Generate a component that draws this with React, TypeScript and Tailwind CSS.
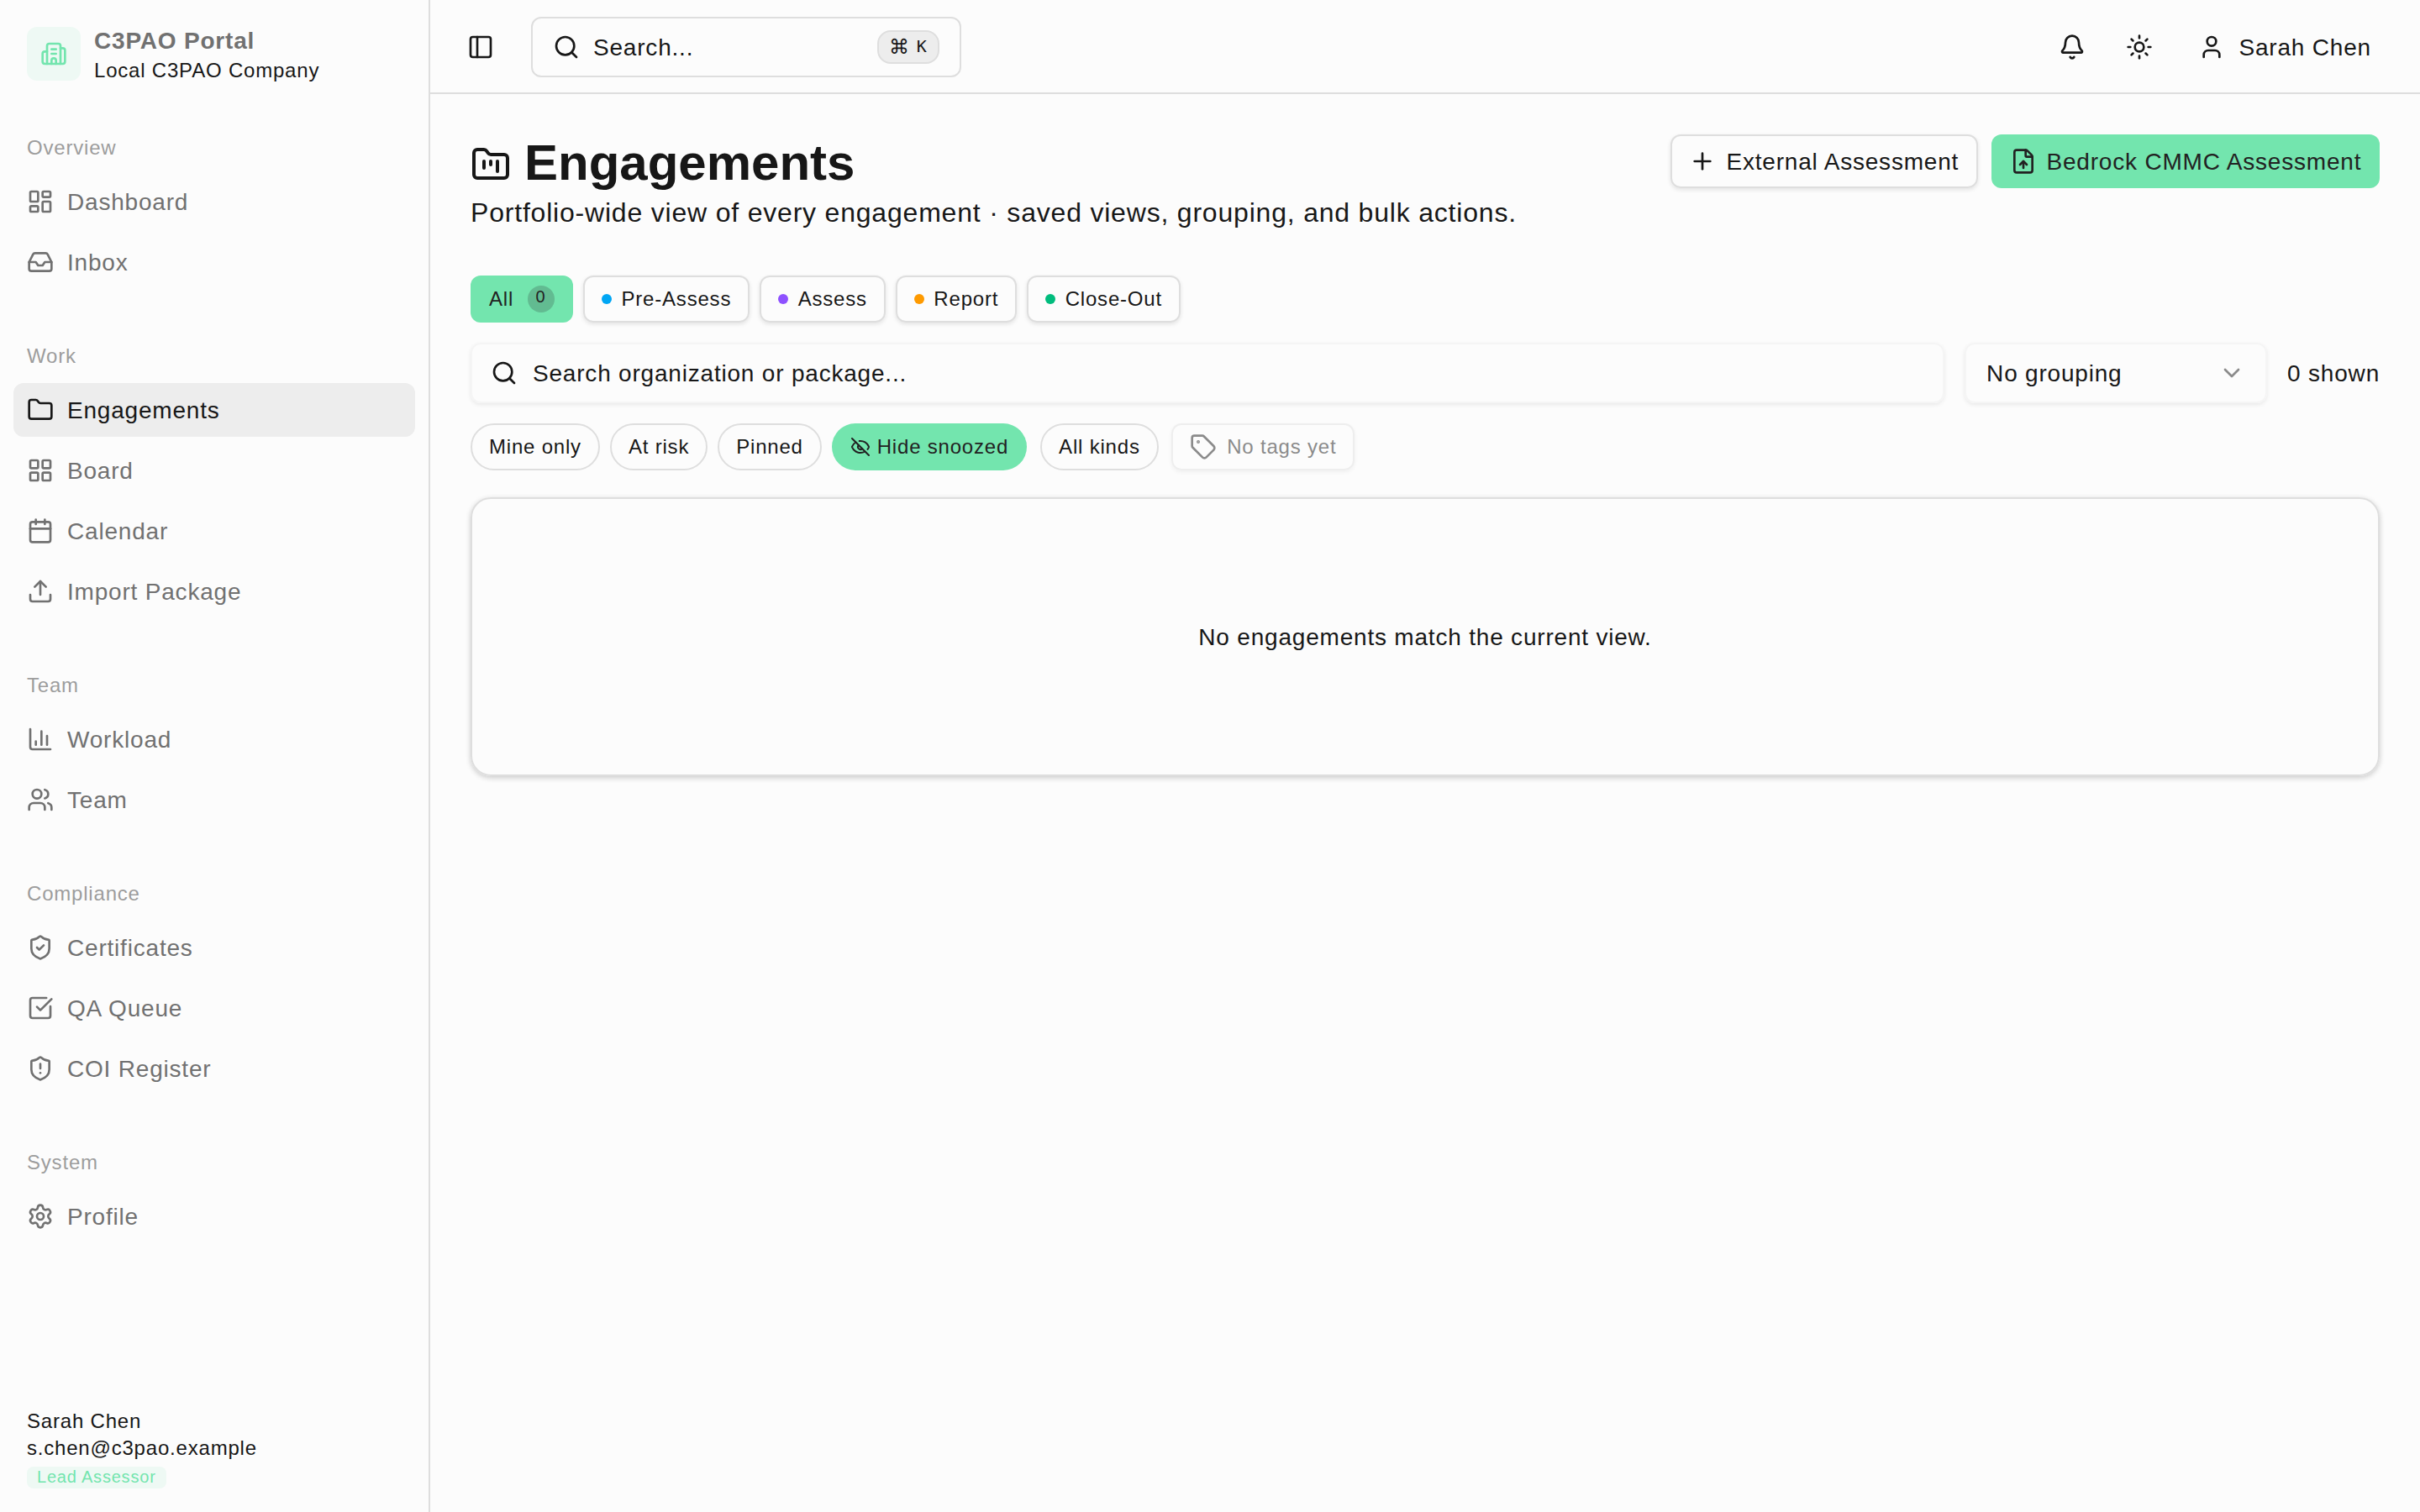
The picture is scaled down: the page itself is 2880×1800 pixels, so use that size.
import {
  Bell,
  Building2,
  Calendar,
  ChartColumn,
  ChevronDown,
  EyeOff,
  FileUp,
  Folder,
  FolderKanban,
  Inbox,
  LayoutDashboard,
  LayoutGrid,
  PanelLeft,
  Plus,
  Search,
  Settings,
  ShieldAlert,
  ShieldCheck,
  SquareCheckBig,
  Sun,
  Tag,
  Upload,
  User,
  Users,
  type LucideIcon,
} from "lucide-react";
import { useState } from "react";

interface NavItem {
  label: string;
  icon: LucideIcon;
}

interface NavGroup {
  title: string;
  items: NavItem[];
}

const navGroups: NavGroup[] = [
  {
    title: "Overview",
    items: [
      { label: "Dashboard", icon: LayoutDashboard },
      { label: "Inbox", icon: Inbox },
    ],
  },
  {
    title: "Work",
    items: [
      { label: "Engagements", icon: Folder },
      { label: "Board", icon: LayoutGrid },
      { label: "Calendar", icon: Calendar },
      { label: "Import Package", icon: Upload },
    ],
  },
  {
    title: "Team",
    items: [
      { label: "Workload", icon: ChartColumn },
      { label: "Team", icon: Users },
    ],
  },
  {
    title: "Compliance",
    items: [
      { label: "Certificates", icon: ShieldCheck },
      { label: "QA Queue", icon: SquareCheckBig },
      { label: "COI Register", icon: ShieldAlert },
    ],
  },
  {
    title: "System",
    items: [{ label: "Profile", icon: Settings }],
  },
];

const phases = [
  { label: "Pre-Assess", dot: "bg-[#00a6f4]" },
  { label: "Assess", dot: "bg-[#8e51ff]" },
  { label: "Report", dot: "bg-[#fe9a00]" },
  { label: "Close-Out", dot: "bg-[#00bc7d]" },
];

function Sidebar() {
  const [active, setActive] = useState("Engagements");

  return (
    <aside className="flex w-[512px] shrink-0 flex-col border-r-2 border-[#dedede]">
      <div className="mt-8 flex h-16 items-center gap-4 px-8">
        <div className="flex size-16 items-center justify-center rounded-xl bg-[#eef9f4] text-[#73e5ae]">
          <Building2 size={32} />
        </div>
        <div>
          <p className="text-[28px] leading-10 font-semibold text-[#717171]">C3PAO Portal</p>
          <p className="text-2xl leading-[30px]">Local C3PAO Company</p>
        </div>
      </div>

      <nav className="mt-12 flex flex-1 flex-col gap-12 px-4">
        {navGroups.map((group) => (
          <div key={group.title}>
            <p className="flex h-16 items-center px-4 text-2xl text-[#9d9d9d]">{group.title}</p>
            <ul className="space-y-2">
              {group.items.map(({ label, icon: Icon }) => (
                <li key={label}>
                  <button
                    type="button"
                    onClick={() => setActive(label)}
                    className={`flex h-16 w-full items-center gap-4 rounded-xl px-4 text-[28px] ${active === label ? "bg-[#ededed] text-[#171717]" : "text-[#717171]"}`}
                  >
                    <Icon size={32} />
                    <span className="pt-px">{label}</span>
                  </button>
                </li>
              ))}
            </ul>
          </div>
        ))}
      </nav>

      <div className="px-8 pb-7 text-2xl leading-8">
        <p>Sarah Chen</p>
        <p>s.chen@c3pao.example</p>
        <span className="mt-1.5 flex h-[26px] w-fit items-center rounded-lg bg-[#eef9f4] px-3 pb-[3px] text-xl text-[#73e5ae]">
          Lead Assessor
        </span>
      </div>
    </aside>
  );
}

function Topbar() {
  return (
    <header className="flex h-28 shrink-0 items-center border-b-2 border-[#dedede] pt-0.5 pr-9 pl-7">
      <button type="button" className="flex size-16 items-center justify-center" aria-label="Toggle sidebar">
        <PanelLeft size={32} />
      </button>
      <div className="ml-7 flex h-[72px] w-[512px] items-center gap-4 rounded-xl border-2 border-[#dedede] px-6 text-[28px]">
        <Search size={32} />
        <span className="flex-1 pt-px">Search...</span>
        <kbd className="flex h-10 w-[74px] items-center gap-2 rounded-2xl border-2 border-[#dedede] bg-[#ededed] px-3 leading-none">
          <span className="font-['DejaVu_Sans',sans-serif] text-2xl leading-none">⌘</span>
          <span className="pb-0.5 font-['DejaVu_Sans_Mono',monospace] text-xl leading-none">K</span>
        </kbd>
      </div>

      <div className="ml-auto flex items-center gap-4 text-[28px]">
        <button type="button" className="flex size-16 items-center justify-center" aria-label="Notifications">
          <Bell size={32} />
        </button>
        <button type="button" className="flex size-16 items-center justify-center" aria-label="Toggle theme">
          <Sun size={32} />
        </button>
        <button type="button" className="flex h-16 w-[250px] items-center gap-[16.5px] pl-[22px] whitespace-nowrap">
          <User size={32} />
          <span className="pt-px">Sarah Chen</span>
        </button>
      </div>
    </header>
  );
}

function PillButton({ label }: { label: string }) {
  return (
    <button type="button" className="flex h-14 items-center rounded-full border-2 border-[#dedede] px-5">
      {label}
    </button>
  );
}

export default function App() {
  return (
    <div className="flex h-[1800px] w-[2880px] overflow-hidden bg-[#fcfcfc] font-['Liberation_Sans',Arial,sans-serif] tracking-[0.8px] text-[#171717]">
      <Sidebar />

      <div className="flex min-w-0 flex-1 flex-col">
        <Topbar />

        <main className="flex flex-col p-12">
          <div className="flex items-start justify-between">
            <div>
              <h1 className="flex h-16 items-center gap-4 text-[60px] leading-[64px] font-bold tracking-normal">
                <FolderKanban size={48} className="mt-2" />
                <span className="pt-[3px]">Engagements</span>
              </h1>
              <p className="mt-[5px] text-[32px] leading-[48px]">
                Portfolio-wide view of every engagement · saved views, grouping, and bulk actions.
              </p>
            </div>
            <div className="flex gap-4 text-[28px] whitespace-nowrap">
              <button
                type="button"
                className="flex h-16 w-[366px] items-center gap-[12.5px] rounded-xl border-2 border-[#dedede] pl-5 shadow-[0_2px_5px_rgba(0,0,0,0.1)]"
              >
                <Plus size={32} />
                <span className="pt-px">External Assessment</span>
              </button>
              <button
                type="button"
                className="flex h-16 w-[462px] items-center gap-[11.5px] rounded-xl bg-[#73e5ae] pl-[22px] text-[#222]"
              >
                <FileUp size={32} />
                <span className="pt-px">Bedrock CMMC Assessment</span>
              </button>
            </div>
          </div>

          <div className="mt-[51px] flex gap-3 text-2xl">
            <button type="button" className="flex h-14 w-[122px] items-center justify-between rounded-xl bg-[#73e5ae] px-[22px] text-[#222]">
              All
              <span className="flex size-8 justify-center rounded-full bg-[#62bb91] pr-px text-xl leading-[26px]">0</span>
            </button>
            {phases.map((phase) => (
              <button
                key={phase.label}
                type="button"
                className="flex h-14 items-center gap-[11.5px] rounded-xl border-2 border-[#dedede] px-5 shadow-[0_2px_5px_rgba(0,0,0,0.1)]"
              >
                <span className={`size-3 rounded-full ${phase.dot}`} />
                {phase.label}
              </button>
            ))}
          </div>

          <div className="mt-6 flex items-center gap-6 text-[28px]">
            <div className="flex h-[72px] flex-1 items-center gap-[18px] rounded-xl border-2 border-[#f5f5f5] px-[22px] shadow-[0_2px_5px_rgba(0,0,0,0.08)]">
              <Search size={32} />
              <span className="pt-px">Search organization or package...</span>
            </div>
            <button
              type="button"
              className="flex h-[72px] w-[360px] items-center justify-between rounded-xl border-2 border-[#f5f5f5] px-6 shadow-[0_2px_5px_rgba(0,0,0,0.08)]"
            >
              <span className="pt-px">No grouping</span>
              <ChevronDown size={32} className="text-[#8b8b8b]" />
            </button>
            <span className="pt-px">0 shown</span>
          </div>

          <div className="mt-6 flex gap-4 text-2xl">
            <div className="flex gap-3">
              <PillButton label="Mine only" />
              <PillButton label="At risk" />
              <PillButton label="Pinned" />
              <button type="button" className="flex h-14 items-center gap-2 rounded-full bg-[#73e5ae] px-[22px] text-[#222]">
                <EyeOff size={24} />
                Hide snoozed
              </button>
            </div>
            <PillButton label="All kinds" />
            <button
              type="button"
              className="-ml-px flex h-14 items-center gap-[12.5px] rounded-xl border-2 border-[#eeeeee] px-5 text-[#8b8b8b] shadow-[0_2px_5px_rgba(0,0,0,0.05)]"
            >
              <Tag size={32} />
              No tags yet
            </button>
          </div>

          <section className="mt-8 flex h-[332px] items-center justify-center rounded-3xl border-2 border-[#dedede] text-[28px] shadow-[0_2px_6px_rgba(0,0,0,0.2)]">
            <span className="pt-px">No engagements match the current view.</span>
          </section>
        </main>
      </div>
    </div>
  );
}
